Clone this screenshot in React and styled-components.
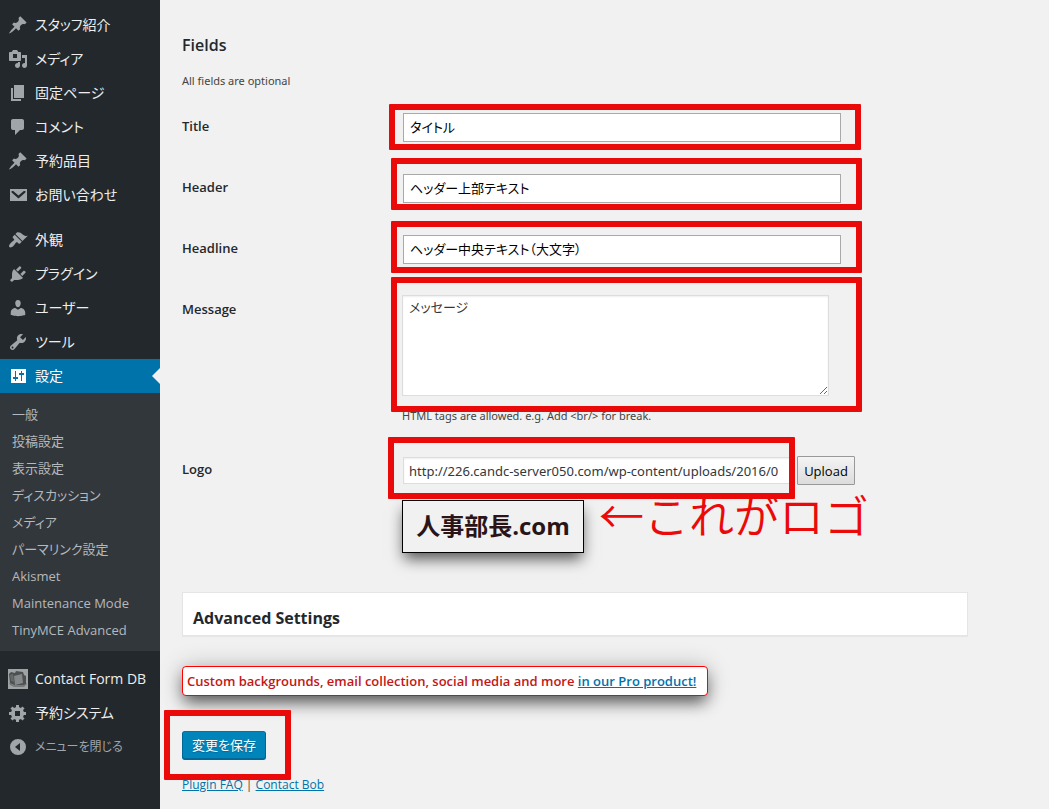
import React from 'react';
import styled, { createGlobalStyle } from 'styled-components';

const icons = {
  pin: 'M10.44 3.02l1.82-1.82 6.36 6.35-1.83 1.82c-1.05-.68-2.48-.57-3.41.36l-.75.75c-.92.93-1.04 2.35-.35 3.41l-1.83 1.82-2.41-2.41-2.8 2.79c-.42.42-3.38 2.71-3.8 2.29s1.86-3.39 2.28-3.81l2.79-2.79L4.1 9.36l1.83-1.82c1.05.69 2.48.57 3.4-.36l.75-.75c.93-.92 1.05-2.35.36-3.41z',
  media: 'M13 11V4c0-.55-.45-1-1-1h-1.67L9 1H5L3.67 3H2c-.55 0-1 .45-1 1v7c0 .55.45 1 1 1h10c.55 0 1-.45 1-1zM5 5h4v4H5zM14 6h5v10.5c0 1.38-1.12 2.5-2.5 2.5S14 17.88 14 16.5s1.12-2.5 2.5-2.5c.17 0 .34.02.5.05V9h-3V6zm-4 8.05V13h2v3.5c0 1.38-1.12 2.5-2.5 2.5S7 17.88 7 16.5 8.12 14 9.5 14c.17 0 .34.02.5.05z',
  page: 'M6 15V2h10v13H6zm-1 1h8v2H3V5h2v11z',
  comment: 'M5 2h9c1.1 0 2 .9 2 2v7c0 1.1-.9 2-2 2h-2l-5 5v-5H5c-1.1 0-2-.9-2-2V4c0-1.1.9-2 2-2z',
  mail: 'M2 4h17v12H2zM3.6 6v1.6l6.9 6 6.9-6V6h-1.6l-5.3 4.6L5.200 6z',
  appearance: 'M14.48 11.06L7.41 3.99l1.5-1.5c.5-.56 2.3-.47 3.51.32 1.21.8 1.43 1.28 2.91 2.1 1.18.64 2.45 1.26 4.45.85zm-.71.71L6.7 4.7 4.93 6.47c-.39.39-.39 1.02 0 1.41l1.06 1.06c.39.39.39 1.03 0 1.42-.6.6-1.43 1.11-2.21 1.69-.35.26-.7.53-1.01.84C1.43 14.23.4 16.08 1.4 17.07c.99 1 2.84-.03 4.18-1.36.31-.31.58-.66.85-1.02.57-.78 1.08-1.61 1.69-2.21.39-.39 1.02-.39 1.41 0l1.06 1.06c.39.39 1.02.39 1.41 0z',
  plugin: 'M13.11 4.36L9.87 7.6 8 5.73l3.24-3.24c.35-.34 1.05-.2 1.56.32.52.51.66 1.21.31 1.55zm-8 1.77l.91-1.12 9.01 9.01-1.19.84c-.71.71-2.63 1.16-3.82 1.16H6.14L4.9 17.26c-.59.59-1.54.59-2.12 0-.59-.58-.59-1.53 0-2.12l1.24-1.24v-3.88c0-1.13.4-3.19 1.09-3.89zm7.26 3.97l3.24-3.24c.34-.35 1.04-.21 1.55.31.52.51.66 1.21.31 1.55l-3.24 3.25z',
  user: 'M10 9.25c-2.27 0-2.73-3.44-2.73-3.44C7 4.02 7.82 2 9.97 2c2.16 0 2.98 2.02 2.71 3.81 0 0-.41 3.44-2.68 3.44zm0 2.57L12.72 10c2.39 0 4.52 2.33 4.52 4.53v2.49s-3.65 1.13-7.24 1.13c-3.65 0-7.24-1.13-7.24-1.13v-2.49c0-2.25 1.94-4.48 4.47-4.48z',
  tool: 'M16.68 9.77c-1.34 1.34-3.3 1.67-4.95.99l-5.41 6.52c-.99.99-2.59.99-3.58 0s-.99-2.59 0-3.57l6.52-5.42c-.68-1.65-.35-3.61.99-4.95 1.28-1.28 3.12-1.62 4.72-1.06l-2.89 2.89 2.82 2.82 2.86-2.87c.53 1.58.18 3.39-1.08 4.65zM3.81 16.21c.4.39 1.04.39 1.43 0 .4-.4.4-1.04 0-1.43-.39-.4-1.03-.4-1.43 0-.39.39-.39 1.03 0 1.43z',
  settings: 'M18 17V3H3v14zM8 11h2v2H8v2H7v-2H5v-2h2V5h1zm5-2h-2V7h2V5h1v2h2v2h-2v6h-1z',
  gear: 'M18 12h-2.18c-.17.7-.44 1.35-.81 1.93l1.54 1.54-2.1 2.1-1.54-1.54c-.58.36-1.23.63-1.91.79V19H8v-2.18c-.68-.16-1.33-.43-1.91-.79l-1.54 1.54-2.12-2.12 1.54-1.54c-.36-.58-.63-1.23-.79-1.91H1V9.03h2.17c.16-.7.44-1.35.8-1.94L2.43 5.55l2.1-2.1 1.54 1.54c.58-.37 1.24-.64 1.93-.81V2h3v2.18c.68.16 1.33.43 1.91.79l1.54-1.54 2.12 2.12-1.54 1.54c.36.59.64 1.24.8 1.94H18V12zM7 8v5h5V8z',
  collapse: 'M10 2a8 8 0 100 16 8 8 0 000-16zM12 6v8l-5-4z',
};

const contentMenu = [
  { icon: 'pin', label: 'スタッフ紹介' },
  { icon: 'media', label: 'メディア' },
  { icon: 'page', label: '固定ページ' },
  { icon: 'comment', label: 'コメント' },
  { icon: 'pin', label: '予約品目' },
  { icon: 'mail', label: 'お問い合わせ' },
];

const siteMenu = [
  { icon: 'appearance', label: '外観' },
  { icon: 'plugin', label: 'プラグイン' },
  { icon: 'user', label: 'ユーザー' },
  { icon: 'tool', label: 'ツール' },
  { icon: 'settings', label: '設定', current: true },
];

const settingsMenu = [
  '一般',
  '投稿設定',
  '表示設定',
  'ディスカッション',
  'メディア',
  'パーマリンク設定',
  'Akismet',
  'Maintenance Mode',
  'TinyMCE Advanced',
];

const textFields = [
  { id: 'title', label: 'Title', value: 'タイトル' },
  { id: 'header', label: 'Header', value: 'ヘッダー上部テキスト' },
  { id: 'headline', label: 'Headline', value: 'ヘッダー中央テキスト（大文字）' },
];

// red frames drawn over the form
const frames = [
  { x: 389, y: 104, w: 472, h: 46 },
  { x: 391, y: 158, w: 471, h: 52 },
  { x: 391, y: 221, w: 471, h: 52 },
  { x: 391, y: 277, w: 471, h: 135 },
  { x: 388, y: 437, w: 407, h: 62 },
  { x: 164, y: 710, w: 127, h: 70 },
];

const Icon = ({ name }) => (
  <IconSvg viewBox='0 0 20 20' aria-hidden='true'>
    <path fillRule='evenodd' d={icons[name]} />
  </IconSvg>
);

const FormDbIcon = () => (
  <IconSvg viewBox='0 0 20 20' aria-hidden='true'>
    <rect width='20' height='20' fill='#a0a3a4' />
    <path fill='#77797a' d='M1 14l4-1h12l2 2-3 3H6l-4-2z' />
    <path fill='#4d5051' d='M1 5l2-2 4 1 1-2 7 1 1 3 2 1v8l-3 1H7l-5-2z' />
    <path fill='#85888a' d='M6 7l8-2 1 9-8 2z' />
    <path fill='#66696a' d='M2 6l3-1 1 8-3-1z' />
  </IconSvg>
);

const MenuList = ({ items }) =>
  items.map((item) => (
    <MenuLink key={item.label} href='#' $current={item.current}>
      <Icon name={item.icon} />
      {item.label}
    </MenuLink>
  ));

const App = () => {
  return (
    <>
      <GlobalStyle />
      <Page>
        <Sidebar>
          <MenuList items={contentMenu} />
          <Separator />
          <MenuList items={siteMenu} />
          <SubMenu>
            {settingsMenu.map((label) => (
              <a key={label} href='#'>{label}</a>
            ))}
          </SubMenu>
          <Separator />
          <MenuLink href='#'>
            <FormDbIcon />
            Contact Form DB
          </MenuLink>
          <MenuLink href='#'>
            <Icon name='gear' />
            予約システム
          </MenuLink>
          <CollapseButton type='button'>
            <Icon name='collapse' />
            メニューを閉じる
          </CollapseButton>
        </Sidebar>

        <Main>
          <Heading>Fields</Heading>
          <Intro>All fields are optional</Intro>

          {textFields.map((field) => (
            <Row key={field.id}>
              <Label htmlFor={field.id}>{field.label}</Label>
              <Field>
                <TextInput id={field.id} type='text' defaultValue={field.value} />
              </Field>
            </Row>
          ))}
          <Row>
            <Label htmlFor='message'>Message</Label>
            <Field>
              <MessageArea id='message' defaultValue='メッセージ' />
              <Help>HTML tags are allowed. e.g. Add &lt;br/&gt; for break.</Help>
            </Field>
          </Row>
          <Row>
            <Label htmlFor='logo'>Logo</Label>
            <Field>
              <UploadRow>
                <UrlInput
                  id='logo'
                  type='text'
                  defaultValue='http://226.candc-server050.com/wp-content/uploads/2016/0'
                />
                <UploadButton type='button'>Upload</UploadButton>
              </UploadRow>
              <LogoPreview>人事部長.com</LogoPreview>
            </Field>
          </Row>

          <Panel>
            <h3>Advanced Settings</h3>
          </Panel>
          <Promo>
            Custom backgrounds, email collection, social media and more <a href='#'>in our Pro product!</a>
          </Promo>
          <SaveButton type='submit'>変更を保存</SaveButton>
          <FooterLinks>
            <a href='#'>Plugin FAQ</a> | <a href='#'>Contact Bob</a>
          </FooterLinks>
        </Main>

        {frames.map((frame) => (
          <Frame key={frame.y} $x={frame.x} $y={frame.y} $w={frame.w} $h={frame.h} />
        ))}
        <Note>←これがロゴ</Note>
      </Page>
    </>
  );
};

export default App;

const GlobalStyle = createGlobalStyle`
  * {
    box-sizing: border-box;
  }
  body {
    margin: 0;
    background: #f1f1f1;
    color: #444;
    font-family: 'Open Sans', 'Noto Sans CJK JP', sans-serif;
    font-size: 13px;
    line-height: 18px;
    font-feature-settings: 'palt';
  }
  button, input, textarea {
    font: inherit;
    font-feature-settings: inherit;
  }
  a {
    color: #0073aa;
  }
`;

const Page = styled.div`
  position: relative;
  display: flex;
  min-height: 100vh;
`;

const Sidebar = styled.nav`
  flex: 0 0 160px;
  padding-top: 8px;
  background: #23282d;
`;

const IconSvg = styled.svg`
  flex: none;
  width: 20px;
  height: 20px;
  margin: 0 7px 0 8px;
  fill: #a0a5aa;
`;

const MenuLink = styled.a`
  position: relative;
  display: flex;
  align-items: center;
  height: 34px;
  background: ${(props) => (props.$current ? '#0073aa' : 'transparent')};
  color: ${(props) => (props.$current ? '#fff' : '#eee')};
  font-size: 14px;
  text-decoration: none;
  white-space: nowrap;
  ${(props) => props.$current && `
    svg {
      fill: #fff;
    }
    &::after {
      content: '';
      position: absolute;
      right: 0;
      top: 9px;
      border: 8px solid transparent;
      border-left-width: 0;
      border-right-color: #f1f1f1;
    }
  `}
`;

const Separator = styled.div`
  height: 11px;
`;

const SubMenu = styled.div`
  padding: 8px 0 7px;
  background: #32373c;
  a {
    display: block;
    padding: 0 12px;
    color: #b4b9be;
    font-size: 13px;
    line-height: 27px;
    text-decoration: none;
  }
`;

const CollapseButton = styled.button`
  display: flex;
  align-items: center;
  width: 100%;
  height: 34px;
  padding: 0;
  border: 0;
  background: transparent;
  color: #a0a5aa;
  font-size: 12px;
  white-space: nowrap;
`;

const Main = styled.main`
  flex: 1;
  min-width: 0;
  padding: 36px 20px 12px 22px;
`;

const Heading = styled.h3`
  margin: 0 0 18px;
  color: #23282d;
  font-size: 16px;
  line-height: 18px;
  font-weight: 600;
`;

const Intro = styled.p`
  margin: 0 0 7px;
  font-family: 'Noto Sans', sans-serif;
  font-size: 11px;
`;

const Row = styled.div`
  display: grid;
  grid-template-columns: 220px 1fr;
`;

const Label = styled.label`
  padding: 20px 10px 20px 0;
  color: #23282d;
  font-weight: 600;
`;

const Field = styled.div`
  padding: 15px 0;
`;

const TextInput = styled.input`
  display: block;
  width: 438px;
  max-width: 100%;
  height: 29px;
  margin: 1px;
  padding: 2px 6px 4px;
  border: 1px solid #a9a9a9;
  background: #fff;
  color: #000;
`;

const MessageArea = styled.textarea`
  display: block;
  width: 427px;
  max-width: 100%;
  height: 101px;
  padding: 2px 6px;
  border: 1px solid #ddd;
  box-shadow: inset 0 1px 2px rgba(0, 0, 0, 0.07);
  background: #fff;
  color: #32373c;
`;

const Help = styled.p`
  margin: 11px 0 0;
  font-family: 'Noto Sans', sans-serif;
  font-size: 11px;
`;

const UploadRow = styled.div`
  display: flex;
  align-items: center;
  gap: 2px;
  padding: 1px;
`;

const UrlInput = styled.input`
  width: 392px;
  height: 27px;
  padding: 3px 5px;
  border: 1px solid #ddd;
  box-shadow: inset 0 1px 2px rgba(0, 0, 0, 0.07);
  background: #fff;
  color: #32373c;
  font-family: 'Noto Sans', sans-serif;
`;

const UploadButton = styled.button`
  width: 58px;
  height: 29px;
  padding: 0;
  border: 1px solid #999;
  border-radius: 1px;
  background: linear-gradient(#f4f4f4, #dcdcdc);
  color: #000;
`;

const LogoPreview = styled.div`
  display: flex;
  align-items: center;
  justify-content: center;
  width: 182px;
  height: 53px;
  margin-top: 14px;
  padding-bottom: 2px;
  border: 1px solid #000;
  box-shadow: 0 8px 14px -2px rgba(0, 0, 0, 0.65);
  color: #2a1418;
  font-size: 24px;
  font-weight: 700;
  white-space: nowrap;
`;

const Panel = styled.section`
  max-width: 786px;
  height: 44px;
  margin: 24px 0 30px;
  padding: 16px 10px 8px;
  border: 1px solid #e5e5e5;
  box-shadow: 0 1px 1px rgba(0, 0, 0, 0.04);
  background: #fff;
  h3 {
    margin: 0;
    color: #23282d;
    font-size: 16px;
    line-height: 18px;
  }
`;

const Promo = styled.div`
  width: 526px;
  padding: 5px 4px;
  border: 1px solid #f00;
  border-radius: 4px;
  box-shadow: 0 8px 16px -2px rgba(0, 0, 0, 0.6), 0 0 24px rgba(0, 0, 0, 0.2);
  background: #fff;
  color: #c31616;
  font-size: 13px;
  font-weight: 600;
  white-space: nowrap;
`;

const SaveButton = styled.button`
  display: block;
  height: 29px;
  width: 84px;
  margin-top: 35px;
  padding: 0 0 2px;
  border: 1px solid #006799;
  border-top-color: #0073aa;
  border-radius: 3px;
  box-shadow: inset 0 -1px 0 #006799;
  background: #0085ba;
  color: #fff;
  text-shadow: 0 1px 1px #006799;
`;

const FooterLinks = styled.p`
  margin: 16px 0 0;
  font-size: 12px;
`;

const Frame = styled.div`
  position: absolute;
  left: ${(props) => props.$x}px;
  top: ${(props) => props.$y}px;
  width: ${(props) => props.$w}px;
  height: ${(props) => props.$h}px;
  border: 6px solid #eb0a0a;
  border-radius: 1px;
  pointer-events: none;
`;

const Note = styled.div`
  position: absolute;
  left: 599px;
  top: 488px;
  color: #eb0a0a;
  font-family: 'Noto Sans CJK JP', sans-serif;
  font-feature-settings: normal;
  font-size: 45px;
  font-weight: 350;
  line-height: 54px;
  white-space: nowrap;
`;
